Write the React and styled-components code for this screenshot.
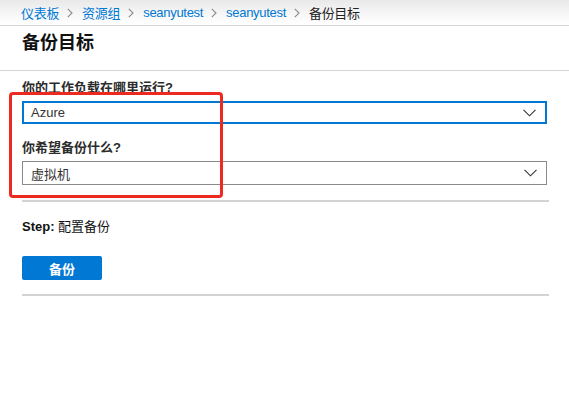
import React from 'react';
import styled, { createGlobalStyle } from 'styled-components';

const GlobalStyle = createGlobalStyle`
  body {
    margin: 0;
    background: #fff;
    font-family: 'Liberation Sans', 'Noto Sans CJK SC', sans-serif;
    color: #222;
  }
`;

const Page = styled.div`
  position: relative;
  width: 569px;
  height: 403px;
  overflow: hidden;
`;

const Breadcrumb = styled.nav`
  display: flex;
  align-items: center;
  height: 25px;
  padding-left: 21px;
  border-bottom: 1px solid #d4d4d4;
  background: linear-gradient(#e9e9e9, #fafafa 70%, #fff);
  font-size: 13px;
  letter-spacing: -0.3px;
`;

const Crumb = styled.span`
  color: ${(p) => (p.$current ? '#222' : '#0078d4')};
  white-space: nowrap;
`;

const Sep = styled.svg`
  width: 6px;
  height: 10px;
  margin: 0 9px 0 8px;
  flex: none;
`;

const Title = styled.h1`
  margin: 5px 0 0;
  padding: 0 0 15px 22px;
  font-size: 18px;
  line-height: 24px;
  font-weight: 700;
  color: #111;
  border-bottom: 1px solid #d6d6d6;
`;

const Form = styled.div`
  padding: 8px 22px 0;
`;

const Label = styled.div`
  font-size: 13px;
  line-height: 18px;
  font-weight: 600;
  color: #2b2b2b;
  margin-top: ${(p) => p.$top || 0}px;
`;

const Select = styled.div`
  box-sizing: border-box;
  display: flex;
  align-items: center;
  justify-content: space-between;
  width: 525px;
  height: ${(p) => (p.$focused ? 23 : 24)}px;
  margin-top: 4px;
  padding: 0 9px 0 ${(p) => (p.$focused ? 7 : 8)}px;
  border: ${(p) => (p.$focused ? '2px solid #0078d4' : '1px solid #8a8a8a')};
  font-size: 13px;
  color: #333;
`;

const Chevron = () => (
  <svg width="13" height="8" viewBox="0 0 13 8">
    <path d="M0.5 0.8 L6.5 6.8 L12.5 0.8" fill="none" stroke="#333" strokeWidth="1.1" />
  </svg>
);

const Divider = styled.div`
  width: 527px;
  height: 2px;
  background: #d3d3d3;
  margin-top: ${(p) => p.$top}px;
`;

const Step = styled.div`
  margin-top: 16px;
  font-size: 13px;
  line-height: 18px;
  color: #111;
  b {
    font-weight: 700;
  }
`;

const Button = styled.button`
  display: block;
  width: 80px;
  height: 24px;
  margin-top: 20px;
  border: none;
  border-radius: 2px;
  background: #0078d4;
  color: #fff;
  font-family: inherit;
  font-size: 13px;
  font-weight: 700;
  padding: 0;
`;

const Highlight = styled.div`
  position: absolute;
  left: 9px;
  top: 92px;
  width: 214px;
  height: 106px;
  box-sizing: border-box;
  border: 3px solid #ec2a1f;
  border-radius: 4px;
  pointer-events: none;
`;

const SepIcon = () => (
  <Sep viewBox="0 0 6 10">
    <path d="M0.8 0.8 L5 5 L0.8 9.2" fill="none" stroke="#8a8a8a" strokeWidth="1.1" />
  </Sep>
);

export default function App() {
  const crumbs = ['仪表板', '资源组', 'seanyutest', 'seanyutest'];
  return (
    <Page>
      <GlobalStyle />
      <Breadcrumb>
        {crumbs.map((c, i) => (
          <React.Fragment key={i}>
            <Crumb>{c}</Crumb>
            <SepIcon />
          </React.Fragment>
        ))}
        <Crumb $current>备份目标</Crumb>
      </Breadcrumb>
      <Title>备份目标</Title>
      <Form>
        <Label>你的工作负载在哪里运行?</Label>
        <Select $focused>
          <span>Azure</span>
          <Chevron />
        </Select>
        <Label $top={15}>你希望备份什么?</Label>
        <Select>
          <span>虚拟机</span>
          <Chevron />
        </Select>
        <Divider $top={15} />
        <Step>
          <b>Step:</b> 配置备份
        </Step>
        <Button>备份</Button>
        <Divider $top={14} />
      </Form>
      <Highlight />
    </Page>
  );
}
